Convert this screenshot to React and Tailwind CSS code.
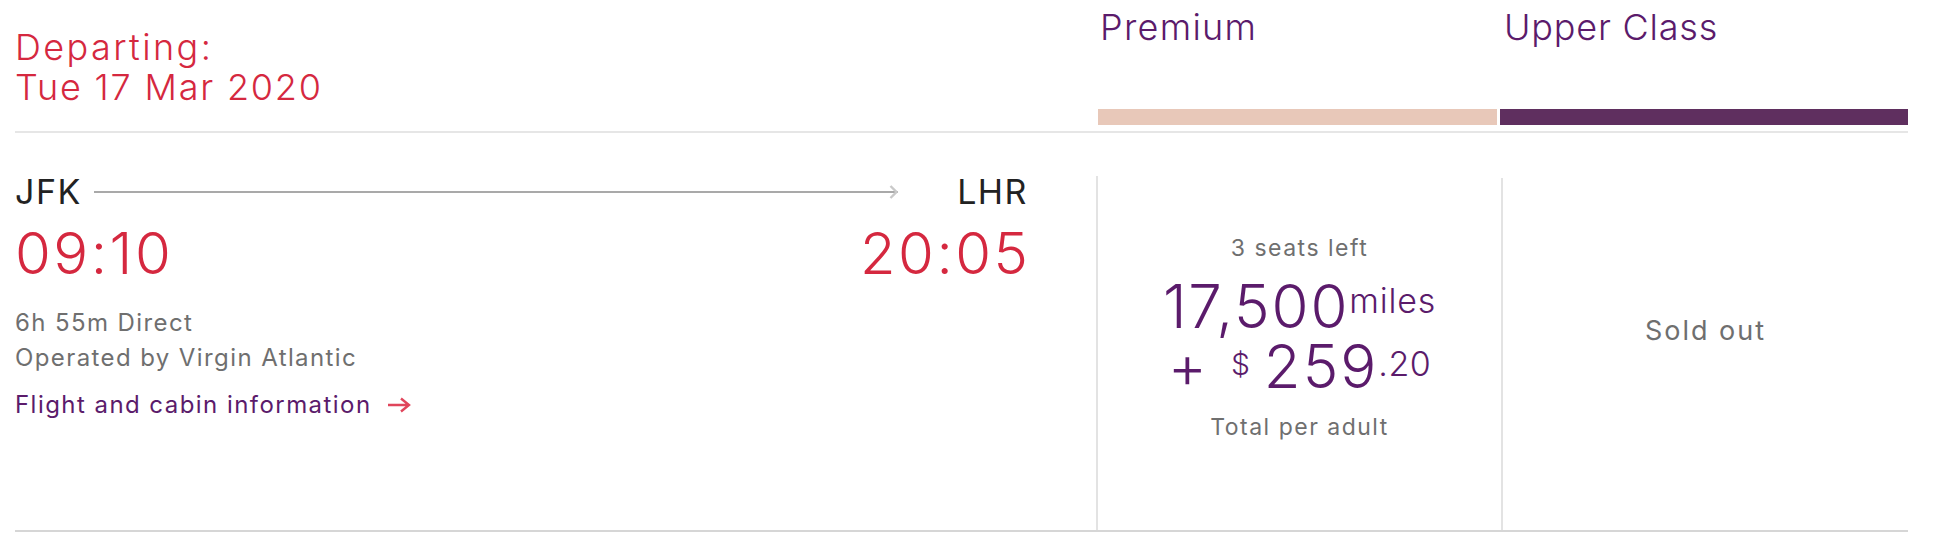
export default function App() {
  return (
    <div className="w-[1948px] h-[540px] bg-white pl-[15px] pr-[40px] font-['Inter','Liberation_Sans',sans-serif] antialiased">
      {/* Header */}
      <div className="grid grid-cols-[1083px_402px_408px] h-[133px] border-b-2 border-[#e6e6e6]">
        <div className="pt-[27px] text-[36px] leading-[40px] font-light tracking-[1.8px] text-[#d5283f]">
          <div className="tracking-[2.4px]">Departing:</div>
          <div>Tue 17 Mar 2020</div>
        </div>
        <div className="flex flex-col justify-between pb-[6px]">
          <div className="pt-[7px] pl-[2px] text-[36px] leading-[40px] font-light tracking-[1.3px] text-[#5b1b6b]">Premium</div>
          <div className="h-[16px] mr-[3px] bg-[#e8c8b9]"></div>
        </div>
        <div className="flex flex-col justify-between pb-[6px]">
          <div className="pt-[7px] pl-[4px] text-[36px] leading-[40px] font-light tracking-[0.8px] text-[#5b1b6b]">Upper Class</div>
          <div className="h-[16px] bg-[#5f2f5f]"></div>
        </div>
      </div>

      {/* Body */}
      <div className="grid grid-cols-[1081px_405px_407px] h-[399px] border-b-2 border-[#d6d6d6]">
        <div className="pt-[42px] pr-[68px]">
          <div className="flex items-center">
            <span className="text-[34px] leading-none tracking-[1.5px] text-[#222]">JFK</span>
            <div className="flex-1 flex items-center ml-[12px] mr-[58px]">
              <div className="flex-1 h-[2px] bg-[#a9a9a9]"></div>
              <svg width="11" height="16" viewBox="0 0 11 16" className="-ml-[10px]">
                <path d="M2.5 2 L8.5 8 L2.5 14" fill="none" stroke="#c9c9c9" strokeWidth="2.4" />
              </svg>
            </div>
            <span className="text-[34px] leading-none tracking-[1.5px] text-[#222]">LHR</span>
          </div>
          <div className="mt-[15px] flex justify-between text-[58px] leading-none font-light tracking-[2.5px] text-[#d5283f]">
            <span>09:10</span>
            <span className="-mr-[2.5px]">20:05</span>
          </div>
          <div className="mt-[23px] text-[24px] leading-[35px] tracking-[1.4px] text-[#6f6f6f]">
            <div>6h 55m Direct</div>
            <div>Operated by Virgin Atlantic</div>
          </div>
          <div className="mt-[12px] flex items-center text-[24px] leading-[35px] tracking-[1.45px] text-[#5b1b6b]">
            <span>Flight and cabin information</span>
            <svg width="26" height="18" viewBox="0 0 26 18" className="ml-[14px]">
              <path d="M2 9 H23 M15 2.5 L23 9 L15 15.5" fill="none" stroke="#e0455b" strokeWidth="2.4" />
            </svg>
          </div>
        </div>

        <div className="mt-[43px] border-l-2 border-[#e3e3e3] flex flex-col items-center pt-[59px]">
          <div className="text-[23px] leading-[26px] tracking-[1.5px] text-[#6f6f6f]">3 seats left</div>
          <div className="mt-[15px] flex items-start text-[#5b1b6b] font-light">
            <span className="text-[60px] leading-none tracking-[1.8px]">17,500</span>
            <span className="pt-[8px] text-[34px] leading-none tracking-[0.8px]">miles</span>
          </div>
          <div className="flex items-start text-[#5b1b6b] font-light">
            <span className="text-[60px] leading-none">+</span>
            <span className="ml-[24px] pt-[13px] text-[30px] leading-none">$</span>
            <span className="ml-[14px] text-[60px] leading-none tracking-[2px]">259</span>
            <span className="pt-[11px] text-[34px] leading-none tracking-[0.5px]">.20</span>
          </div>
          <div className="mt-[18px] text-[23px] leading-[26px] tracking-[1.5px] text-[#6f6f6f]">Total per adult</div>
        </div>

        <div className="mt-[45px] border-l-2 border-[#e3e3e3] flex justify-center pt-[139px]">
          <div className="text-[27px] leading-[28px] tracking-[2px] text-[#6f6f6f]">Sold out</div>
        </div>
      </div>
    </div>
  );
}
